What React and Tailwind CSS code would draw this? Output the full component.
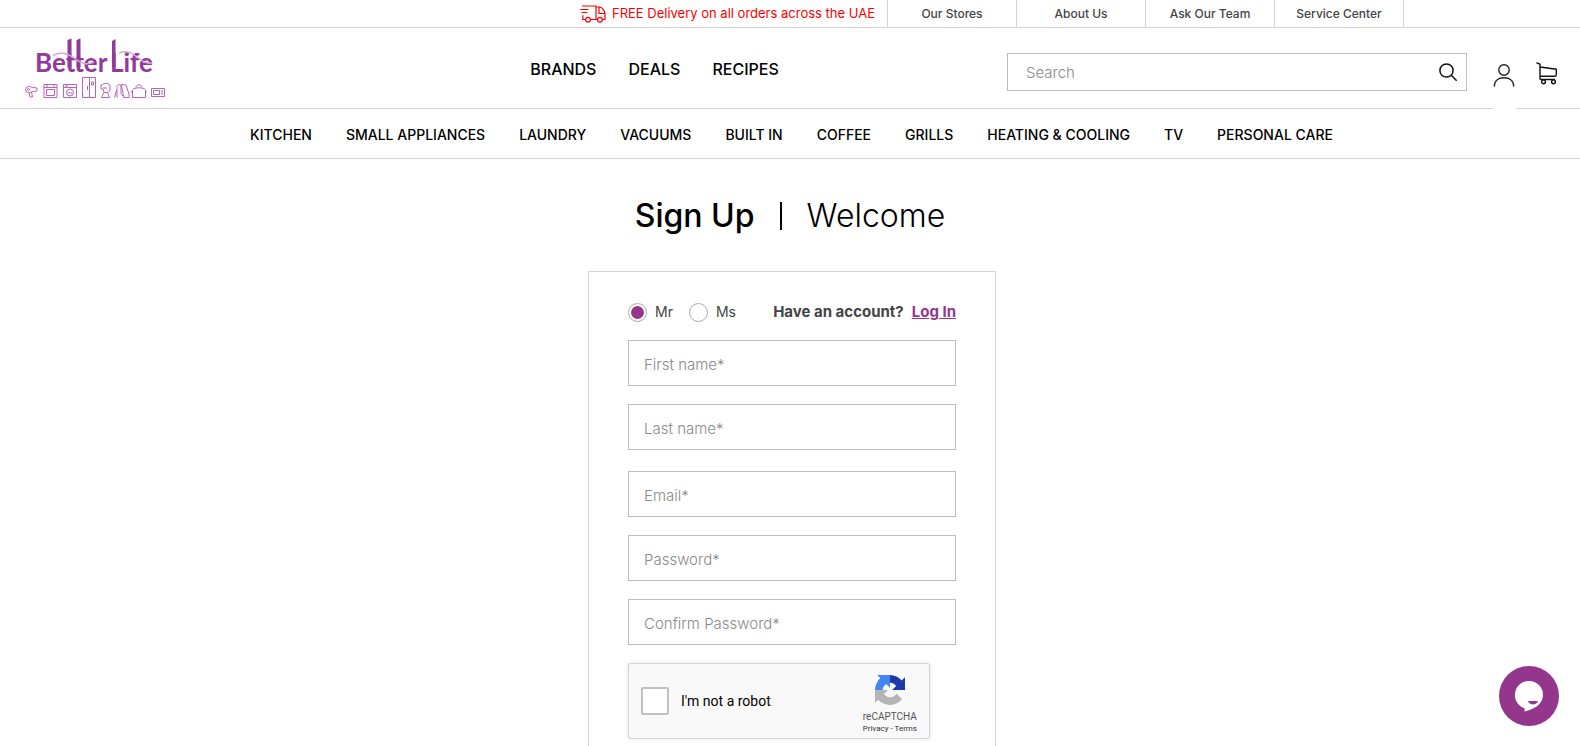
const STORE_LINKS = ["Our Stores", "About Us", "Ask Our Team", "Service Center"];
const MAIN_LINKS = ["BRANDS", "DEALS", "RECIPES"];
const CATEGORIES = [
  "KITCHEN",
  "SMALL APPLIANCES",
  "LAUNDRY",
  "VACUUMS",
  "BUILT IN",
  "COFFEE",
  "GRILLS",
  "HEATING & COOLING",
  "TV",
  "PERSONAL CARE",
];

function TruckIcon() {
  return (
    <svg width="26" height="18" viewBox="0 0 26 18" fill="none" stroke="#ff0000" strokeWidth="1.2" strokeLinecap="round" strokeLinejoin="round" aria-hidden="true">
      <path d="M2.500 1H16v13.500h-5.500M5.500 14.500H2.800V10.500M.8 4.500h7M2 7.500h5" />
      <path d="M16 2h3.500c2.500 0 5 3.500 5.500 6.500v6h-2.500M17.200 14.500H16M19 2.500v6h5.500" />
      <circle cx="8" cy="14.800" r="2.400" />
      <circle cx="19.900" cy="14.800" r="2.400" />
    </svg>
  );
}

function Logo() {
  return (
    <svg width="142" height="62" viewBox="0 0 142 62" aria-label="Better Life" role="img">
      <g fill="#92399a" fontFamily="Lato, sans-serif" fontWeight="700" fontSize="26">
        <text x="11" y="35">Better</text>
        <text x="86" y="35">Life</text>
      </g>
      <path d="M43.500 3l4-1.500v29h-4zM52.500 3l4-1.500v29h-4zM88 4l3.500-2v28H88z" fill="#92399a" />
      <path d="M29 18.500c8-4.500 15-2 21 2.500s12 8 20 4" fill="none" stroke="#d3a6d8" strokeWidth="1.500" />
      <path d="M95 16c8-3 13 0 18 4s9 7 15 6" fill="none" stroke="#d3a6d8" strokeWidth="1.500" />
      <g fill="none" stroke="#b565b8" strokeWidth="1">
        <path d="M4.500 49.500a3 3 0 1 0 0 6c2 0 4-1 8.500-1.500v-3c-4.500-.5-6.500-1.500-8.500-1.500zM5 55.500l1 4.500h2.500l-1-4.800" />
        <circle cx="4.500" cy="52.500" r="1" />
        <path d="M20 47.500h13v13H20zM20 50.500h13M22.500 52.500h8v6h-8zM22 49h2M29 49h2" />
        <path d="M39.500 47.500h13v13h-13zM39.500 50.500h13M41 49h3" />
        <circle cx="46" cy="55.500" r="3.500" />
        <path d="M43.500 56c2-1.500 3 1 5 0" />
        <path d="M58.500 40.500h13v20h-13zM65.500 40.500v20M63.500 49v4M67.500 45h2v3h-2z" />
        <path d="M78 48c2-2 6-2 8 0v5l-2 2.500h-4L79 52h-2v-4zM80 55.500l-2.500 5h8l-2-5M79 51h4" />
        <path d="M93 60.500v-10c0-4 4-4 4 0v6l3 4M97 47.500l5 .5 3 9v3.500h-5zM90.500 60.500l2-7" />
        <path d="M108.500 53c2-3 11-3 13 0v7.500h-13zM112 50.500c0-3.500 6-3.500 6 0M108 55h-1.500M121.500 55h1.500" />
        <path d="M127.500 51.500h13v8h-13zM129.500 53.500h6v4h-6zM138 53v5" />
      </g>
    </svg>
  );
}

function SearchIcon() {
  return (
    <svg width="18" height="18" viewBox="0 0 18 18" fill="none" stroke="#111" strokeWidth="1.500" strokeLinecap="round" aria-hidden="true">
      <circle cx="7.500" cy="7.500" r="6.600" />
      <path d="M12.300 12.300l4.900 4.900" />
    </svg>
  );
}

function UserIcon() {
  return (
    <svg width="22" height="23" viewBox="0 0 22 23" fill="none" stroke="#222" strokeWidth="1.400" aria-hidden="true">
      <circle cx="11" cy="6" r="5.200" />
      <path d="M1.300 22.500c0-5.500 4-8.700 9.700-8.700s9.700 3.200 9.700 8.700" />
    </svg>
  );
}

function CartIcon() {
  return (
    <svg width="22" height="23" viewBox="0 0 22 23" fill="none" stroke="#111" strokeWidth="1.400" strokeLinecap="round" strokeLinejoin="round" aria-hidden="true">
      <path d="M1 1l3 1.200V16.500c0 .7.500 1 1 1h13.500M4 5l16.300 2.200v5.500c0 1-.6 1.600-1.500 1.600H4" />
      <circle cx="7.500" cy="19.800" r="1.900" />
      <circle cx="17.500" cy="19.800" r="1.900" />
    </svg>
  );
}

function RecaptchaLogo() {
  return (
    <svg width="30" height="30" viewBox="0 0 64 64" aria-hidden="true">
      <path fill="#1c3aa9" d="M64 31.955l-.033-1.37V4.687l-7.160 7.160C50.948 4.674 42.033.093 32.050.093c-10.400 0-19.622 4.960-25.458 12.640l11.736 11.860a15.550 15.550 0 0 1 4.754-5.334c2.050-1.600 4.952-2.906 8.968-2.906.485 0 .860.057 1.135.163 4.976.393 9.288 3.140 11.828 7.124l-8.307 8.307L64 31.953" />
      <path fill="#4285f4" d="M31.862.094l-1.370.033H4.594l7.160 7.160C4.580 13.147 0 22.060 0 32.046c0 10.400 4.960 19.622 12.640 25.458L24.500 45.768a15.550 15.550 0 0 1-5.334-4.754c-1.600-2.050-2.906-4.952-2.906-8.968 0-.485.057-.860.163-1.135.393-4.976 3.140-9.288 7.124-11.828l8.307 8.307L31.860.095" />
      <path fill="#b5b5b5" d="M.001 32.045l.033 1.370v25.898l7.160-7.160c5.860 7.173 14.774 11.754 24.760 11.754 10.400 0 19.622-4.960 25.458-12.640l-11.736-11.860a15.550 15.550 0 0 1-4.754 5.334c-2.050 1.600-4.952 2.906-8.968 2.906-.485 0-.860-.057-1.135-.163-4.976-.393-9.288-3.140-11.828-7.124l8.307-8.307c-10.522.040-22.400.066-27.295-.005" />
    </svg>
  );
}

function TopBar() {
  return (
    <div className="flex h-7 items-stretch justify-end border-b border-[#d3d3d3] pr-44">
      <p className="flex items-center gap-1.5 pr-3 text-[13px] text-[#ff0000]">
        <TruckIcon />
        FREE Delivery on all orders across the UAE
      </p>
      <nav className="flex border-l border-[#d3d3d3]">
        {STORE_LINKS.map((label) => (
          <a key={label} href="#" className="flex w-[129px] items-center justify-center border-r border-[#d3d3d3] text-xs font-medium text-[#444]">
            {label}
          </a>
        ))}
      </nav>
    </div>
  );
}

function MainBar() {
  return (
    <div className="flex h-[81px] items-stretch">
      <div className="flex flex-1 items-stretch border-b border-[#d3d3d3] pl-6">
        <a href="#" className="flex items-center">
          <Logo />
        </a>
        <nav className="flex flex-1 items-center justify-center gap-8 pt-[2px] pl-[136px] text-base font-medium">
          {MAIN_LINKS.map((label) => (
            <a key={label} href="#">{label}</a>
          ))}
        </nav>
        <form className="mt-[25px] mr-[26px] flex h-[38px] w-[460px] items-center border border-[#bdbdbd] pr-[9px] pl-[18px]">
          <input type="search" aria-label="Search" placeholder="Search" className="min-w-0 flex-1 pt-[2px] text-[15px] font-light outline-none placeholder:text-[#8a8a8a]" />
          <button type="button" aria-label="Submit search">
            <SearchIcon />
          </button>
        </form>
      </div>
      <button type="button" aria-label="Account" className="flex w-[23px] items-start pt-9">
        <UserIcon />
      </button>
      <div className="flex items-start border-b border-[#d3d3d3] pt-[34px] pr-[22px] pl-5">
        <button type="button" aria-label="Cart">
          <CartIcon />
        </button>
      </div>
    </div>
  );
}

function Field({ label, type = "text" }) {
  return (
    <input
      type={type}
      aria-label={label}
      placeholder={label}
      className="h-[46px] w-full border border-[#bdbdbd] px-[15px] pt-[2px] text-[15px] font-light text-[#444] outline-none placeholder:text-[#8a8a8a]"
    />
  );
}

function Title({ label, checked }) {
  return (
    <label className="flex items-center gap-2 text-sm text-[#444]">
      <input
        type="radio"
        name="title"
        defaultChecked={checked}
        className="size-[19px] appearance-none rounded-full border border-[#aaa] bg-white bg-clip-content p-[2px] checked:bg-[#94368c]"
      />
      {label}
    </label>
  );
}

function Recaptcha() {
  return (
    <div className="flex h-[76px] w-[302px] items-center rounded-[3px] border border-[#d3d3d3] bg-[#f9f9f9] px-3 font-['Roboto',sans-serif] shadow-[0_0_4px_1px_rgba(0,0,0,0.08)]">
      <label className="flex flex-1 items-center gap-3 text-sm text-black">
        <input type="checkbox" className="size-7 appearance-none rounded-[2px] border-2 border-[#c1c1c1] bg-white" />
        I'm not a robot
      </label>
      <div className="flex flex-col items-center pt-1.5 text-[#555]">
        <RecaptchaLogo />
        <span className="pt-1 text-[10px] leading-4">reCAPTCHA</span>
        <span className="text-[8px] leading-2 text-[#333]">
          <a href="#">Privacy</a> - <a href="#">Terms</a>
        </span>
      </div>
    </div>
  );
}

export default function App() {
  return (
    <div className="h-screen overflow-hidden bg-white font-['Inter',sans-serif] text-black">
      <header>
        <TopBar />
        <MainBar />
        <nav className="flex h-[50px] items-center justify-center gap-[34px] border-b border-[#d3d3d3] pt-[2px] pl-[3px] text-sm font-medium">
          {CATEGORIES.map((label) => (
            <a key={label} href="#">{label}</a>
          ))}
        </nav>
      </header>

      <main className="flex flex-col items-center pt-[37px] pl-1">
        <h1 className="flex items-center gap-[25px] pr-1 text-[32px] leading-10">
          <span className="font-medium">Sign Up</span>
          <span className="h-7 w-[2px] bg-black" />
          <span className="font-light">Welcome</span>
        </h1>
        <form className="mt-[35px] flex w-[408px] flex-col border border-[#d3d3d3] px-[39px] pt-[30px] pb-10">
          <div className="mb-[18px] flex h-5 items-center">
            <div className="flex gap-4">
              <Title label="Mr" checked />
              <Title label="Ms" />
            </div>
            <p className="ml-auto flex gap-2 text-[15px] font-bold text-[#444]">
              Have an account?
              <a href="#" className="text-[#94368c] underline">Log In</a>
            </p>
          </div>
          <div className="mb-[21px] flex flex-col gap-[18px]">
            <Field label="First name*" />
            <Field label="Last name*" />
          </div>
          <div className="mb-[18px] flex flex-col gap-[18px]">
            <Field label="Email*" type="email" />
            <Field label="Password*" type="password" />
            <Field label="Confirm Password*" type="password" />
          </div>
          <Recaptcha />
        </form>
      </main>

      <button type="button" aria-label="Chat" className="fixed right-[21px] bottom-5 flex size-[60px] items-center justify-center rounded-full bg-[#94368c]">
        <svg width="30" height="32" viewBox="0 0 30 32" aria-hidden="true">
          <path fill="#fff" d="M15 1a14 14 0 0 1 14 14c0 9-9 14.500-18.500 16.500V28.300A14 14 0 0 1 15 1z" />
          <path fill="#94368c" d="M14 21h10c-1.500 4.500-8.500 4.500-10 0z" />
        </svg>
      </button>
    </div>
  );
}
